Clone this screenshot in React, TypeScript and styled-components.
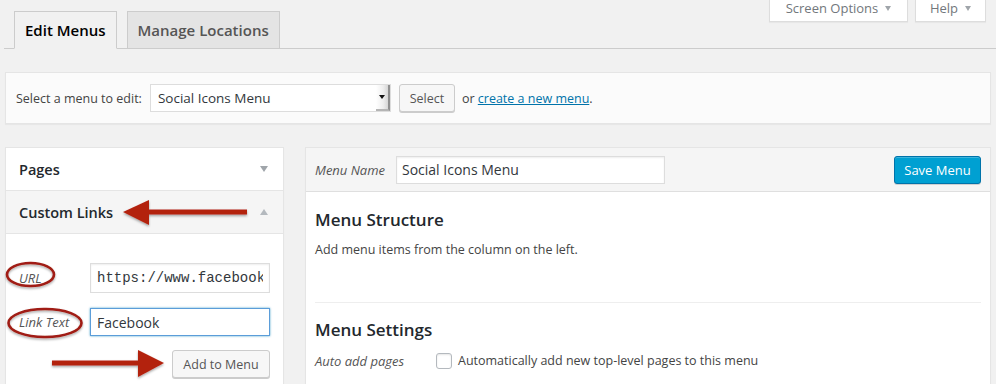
import React from 'react';
import styled, { createGlobalStyle } from 'styled-components';

const Global = createGlobalStyle`
  html, body { margin: 0; padding: 0; background: #f1f1f1; }
  body {
    font-family: "Open Sans", "Liberation Sans", sans-serif;
    font-size: 12.5px;
    color: #444;
    overflow: hidden;
  }
  * { box-sizing: border-box; }
`;

const Page = styled.div`
  width: 996px;
  height: 384px;
  overflow: hidden;
`;

const Header = styled.div`
  display: grid;
`;

const ScreenMeta = styled.div`
  grid-area: 1 / 1;
  justify-self: end;
  align-self: start;
  display: flex;
  gap: 7px;
  margin-right: 10px;
  position: relative;
  z-index: 2;
`;

const MetaButton = styled.div<{ $w: number }>`
  width: ${(p) => p.$w}px;
  height: 22px;
  background: #fff;
  border: 1px solid #ddd;
  border-top: none;
  box-shadow: 0 1px 1px rgba(0, 0, 0, 0.04);
  display: flex;
  justify-content: center;
  align-items: flex-start;
  gap: 7px;
  color: #72777c;
  font-size: 13px;
  line-height: 16px;
`;

const MetaArrow = styled.span`
  width: 0;
  height: 0;
  margin-top: 6px;
  border-left: 3.5px solid transparent;
  border-right: 3.5px solid transparent;
  border-top: 5px solid #a0a5aa;
`;

const Nav = styled.nav`
  grid-area: 1 / 1;
  margin: 11px 0 0 4px;
  padding-left: 10px;
  border-bottom: 1px solid #ccc;
  display: flex;
  align-items: flex-end;
  gap: 10px;
`;

const Tab = styled.div<{ $active?: boolean }>`
  height: ${(p) => (p.$active ? 38 : 37)}px;
  margin-bottom: ${(p) => (p.$active ? -1 : 0)}px;
  padding: 6px 10px;
  line-height: 24px;
  font-size: 15px;
  font-weight: 600;
  border: 1px solid #ccc;
  border-bottom: ${(p) => (p.$active ? '1px solid #f1f1f1' : 'none')};
  background: ${(p) => (p.$active ? '#f1f1f1' : '#e4e4e4')};
  color: ${(p) => (p.$active ? '#000' : '#555')};
`;

const ManageBox = styled.div`
  margin: 23px 5px 0 5px;
  height: 52px;
  padding: 0 10px;
  background: #fbfbfb;
  border: 1px solid #e5e5e5;
  box-shadow: 0 1px 1px rgba(0, 0, 0, 0.04);
  display: flex;
  align-items: center;
`;

const ManageLabel = styled.span`
  color: #444;
  margin-right: 8px;
`;

const FakeSelect = styled.div`
  width: 241px;
  height: 28px;
  background: #fff;
  border: 1px solid #ddd;
  display: flex;
  align-items: stretch;
`;

const SelectText = styled.span`
  flex: 1;
  padding-left: 7px;
  display: flex;
  align-items: center;
  font-size: 13.5px;
  color: #32373c;
`;

const SelectArrowZone = styled.span`
  width: 14px;
  background: linear-gradient(to right, #fff 0%, #eee 60%, #d6d6d6 100%);
  border-right: 2px solid #8f8f8f;
  border-bottom: 2px solid #b5b5b5;
  display: flex;
  align-items: center;
  justify-content: center;
`;

const SelectTriangle = styled.span`
  width: 0;
  height: 0;
  border-left: 3px solid transparent;
  border-right: 3px solid transparent;
  border-top: 4px solid #111;
`;

const Button = styled.button<{ $primary?: boolean; $w: number }>`
  width: ${(p) => p.$w}px;
  height: 28px;
  padding: 0;
  font-family: inherit;
  font-size: ${(p) => (p.$primary ? 13 : 12.5)}px;
  border-radius: 3px;
  cursor: pointer;
  border: 1px solid ${(p) => (p.$primary ? '#0073aa' : '#ccc')};
  background: ${(p) => (p.$primary ? '#00a0d2' : '#f7f7f7')};
  color: ${(p) => (p.$primary ? '#fff' : '#555')};
  box-shadow: ${(p) =>
    p.$primary
      ? 'inset 0 1px 0 rgba(120,200,230,.5), 0 1px 0 rgba(0,0,0,.15)'
      : '0 1px 0 #ccc'};
`;

const SelectButton = styled(Button)`
  margin-left: 8px;
`;

const OrText = styled.span`
  margin-left: 7px;
  color: #444;
`;

const Link = styled.a`
  color: #0073aa;
  text-decoration: underline;
`;

const Columns = styled.div`
  display: flex;
  align-items: flex-start;
  gap: 21px;
  margin: 23px 5px 0 5px;
`;

const LeftCol = styled.div`
  width: 279px;
  flex: none;
  position: relative;
  background: #fff;
  border: 1px solid #e5e5e5;
  box-shadow: 0 1px 1px rgba(0, 0, 0, 0.04);
`;

const SectionTitle = styled.div<{ $open?: boolean }>`
  height: 43px;
  padding: 0 15px 0 13px;
  display: flex;
  align-items: center;
  justify-content: space-between;
  font-size: 14.5px;
  font-weight: 600;
  color: #23282d;
  background: ${(p) => (p.$open ? '#f5f5f5' : '#fff')};
  border-bottom: 1px solid #e5e5e5;
`;

const Toggle = styled.span<{ $up?: boolean }>`
  width: 0;
  height: 0;
  border-left: 4px solid transparent;
  border-right: 4px solid transparent;
  ${(p) =>
    p.$up ? 'border-bottom: 6px solid #b4b9be;' : 'border-top: 6px solid #a0a5aa;'}
`;

const SectionBody = styled.div`
  padding: 29px 13px 20px 13px;
  display: flex;
  flex-direction: column;
  gap: 15px;
`;

const FieldRow = styled.div`
  display: flex;
  align-items: center;
`;

const FieldLabel = styled.label`
  width: 71px;
  font-style: italic;
  color: #555;
  font-size: 13px;
`;

const TextInput = styled.input<{ $mono?: boolean; $focus?: boolean; $h: number }>`
  width: 180px;
  height: ${(p) => p.$h}px;
  padding: 0 6px;
  margin: 0;
  font-family: ${(p) =>
    p.$mono ? '"Liberation Mono", "DejaVu Sans Mono", monospace' : 'inherit'};
  font-size: 14px;
  color: #32373c;
  background: #fff;
  outline: none;
  border: 1px solid ${(p) => (p.$focus ? '#5b9dd9' : '#ddd')};
  box-shadow: ${(p) =>
    p.$focus ? '0 0 2px rgba(30,140,190,.8)' : 'inset 0 1px 2px rgba(0,0,0,.07)'};
`;

const ActionRow = styled.div`
  display: flex;
  justify-content: flex-end;
  margin-top: -1px;
`;

const Overlay = styled.svg`
  position: absolute;
  left: 0;
  top: 0;
  overflow: visible;
  pointer-events: none;
`;

const RightCol = styled.div`
  flex: 1;
  min-width: 0;
  background: #fff;
  border: 1px solid #e5e5e5;
  box-shadow: 0 1px 1px rgba(0, 0, 0, 0.04);
  height: 260px;
`;

const MenuHeader = styled.div`
  height: 44px;
  padding: 0 9px;
  background: #f5f5f5;
  border-bottom: 1px solid #dfdfdf;
  display: flex;
  align-items: center;
`;

const MenuNameLabel = styled.label`
  width: 81px;
  font-size: 13px;
  font-style: italic;
  color: #555;
`;

const MenuNameInput = styled.input`
  width: 269px;
  height: 28px;
  padding: 0 5px;
  font-family: inherit;
  font-size: 14px;
  color: #32373c;
  border: 1px solid #ddd;
  box-shadow: inset 0 1px 2px rgba(0, 0, 0, 0.07);
  outline: none;
`;

const HeaderSpacer = styled.span`
  flex: 1;
`;

const MenuBody = styled.div`
  padding: 16px 9px 0 9px;
`;

const Heading = styled.h3`
  margin: 0;
  font-size: 17px;
  line-height: 24px;
  font-weight: 600;
  color: #23282d;
`;

const Para = styled.p`
  margin: 8px 0 0 0;
  line-height: 20px;
  color: #444;
`;

const Divider = styled.hr`
  margin: 42px 0 15px 0;
  border: none;
  border-top: 1px solid #eee;
`;

const SettingRow = styled.div`
  display: flex;
  align-items: center;
  margin-top: 9px;
  line-height: 20px;
`;

const SettingLabel = styled.span`
  width: 121px;
  font-size: 13px;
  font-style: italic;
  color: #555;
`;

const Checkbox = styled.input`
  appearance: none;
  width: 16px;
  height: 16px;
  margin: 0 6px 0 0;
  border: 1px solid #b4b9be;
  border-radius: 3px;
  background: #fff;
  box-shadow: inset 0 1px 2px rgba(0, 0, 0, 0.1);
`;

export default function App() {
  const red = '#b3200f';
  return (
    <Page>
      <Global />
      <Header>
        <Nav>
          <Tab $active>Edit Menus</Tab>
          <Tab>Manage Locations</Tab>
        </Nav>
        <ScreenMeta>
          <MetaButton $w={139}>
            Screen Options <MetaArrow />
          </MetaButton>
          <MetaButton $w={71}>
            Help <MetaArrow />
          </MetaButton>
        </ScreenMeta>
      </Header>

      <ManageBox>
        <ManageLabel>Select a menu to edit:</ManageLabel>
        <FakeSelect>
          <SelectText>Social Icons Menu</SelectText>
          <SelectArrowZone>
            <SelectTriangle />
          </SelectArrowZone>
        </FakeSelect>
        <SelectButton $w={56}>Select</SelectButton>
        <OrText>
          or <Link href="#">create a new menu</Link>.
        </OrText>
      </ManageBox>

      <Columns>
        <LeftCol>
          <SectionTitle>
            Pages <Toggle />
          </SectionTitle>
          <SectionTitle $open>
            Custom Links <Toggle $up />
          </SectionTitle>
          <SectionBody>
            <FieldRow>
              <FieldLabel>URL</FieldLabel>
              <TextInput $mono $h={30} readOnly value="https://www.facebook.com/" />
            </FieldRow>
            <FieldRow>
              <FieldLabel>Link Text</FieldLabel>
              <TextInput $focus $h={28} readOnly value="Facebook" />
            </FieldRow>
            <ActionRow>
              <Button $w={98}>Add to Menu</Button>
            </ActionRow>
          </SectionBody>
          <Overlay width="279" height="240" viewBox="0 0 279 240">
            <defs>
              <filter id="sh" x="-20%" y="-40%" width="140%" height="180%">
                <feDropShadow dx="0" dy="1.5" stdDeviation="1.2" floodColor="#000" floodOpacity="0.35" />
              </filter>
            </defs>
            <g filter="url(#sh)">
              <rect x="138" y="61.5" width="103" height="5" fill={red} />
              <polygon points="117,64 143,52 143,77" fill={red} />
              <rect x="46" y="212.5" width="90" height="5" fill={red} />
              <polygon points="158,215 132,202 132,229" fill={red} />
            </g>
            <g filter="url(#sh)" fill="none" stroke="#a01c12" strokeWidth="2.6">
              <ellipse cx="24.5" cy="126.5" rx="23.5" ry="11.5" />
              <ellipse cx="39" cy="175" rx="36.5" ry="14" />
            </g>
          </Overlay>
        </LeftCol>

        <RightCol>
          <MenuHeader>
            <MenuNameLabel>Menu Name</MenuNameLabel>
            <MenuNameInput readOnly value="Social Icons Menu" />
            <HeaderSpacer />
            <Button $primary $w={87}>Save Menu</Button>
          </MenuHeader>
          <MenuBody>
            <Heading>Menu Structure</Heading>
            <Para>Add menu items from the column on the left.</Para>
            <Divider />
            <Heading>Menu Settings</Heading>
            <SettingRow>
              <SettingLabel>Auto add pages</SettingLabel>
              <Checkbox type="checkbox" readOnly />
              <span>Automatically add new top-level pages to this menu</span>
            </SettingRow>
          </MenuBody>
        </RightCol>
      </Columns>
    </Page>
  );
}
